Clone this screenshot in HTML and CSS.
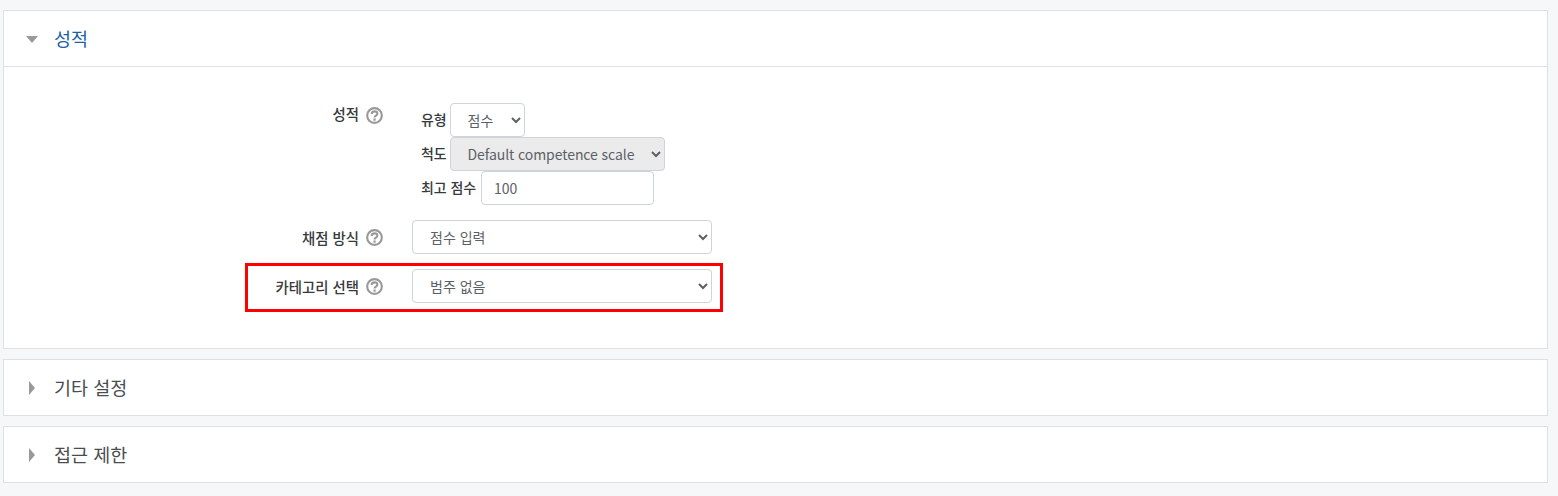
FILE: index.html
```html
<!DOCTYPE html>
<html lang="ko">
<head>
  <meta charset="UTF-8">
  <title>성적</title>
  <link rel="stylesheet" href="styles.css">
</head>
<body>
  <svg class="sprites" width="0" height="0">
    <symbol id="help" viewBox="0 0 16 16">
      <circle cx="8" cy="8" r="6.9" fill="none" stroke="#999" stroke-width="2"/>
      <path d="M5.4 6.6c0-1.6 1.1-2.5 2.7-2.5s2.6.9 2.6 2.2c0 2-2.6 1.8-2.6 3.6" fill="none" stroke="#999" stroke-width="2"/>
      <rect x="7" y="10.8" width="2.1" height="2.1" fill="#999"/>
    </symbol>
  </svg>

  <section class="panel">
    <div class="panel-head open">
      <span class="caret-down"></span>
      <h3 class="panel-title link">성적</h3>
    </div>
    <div class="panel-body">
      <div class="row row-grade">
        <div class="label-col">
          <label>성적</label>
          <svg class="help"><use href="#help"/></svg>
        </div>
        <div class="control-col stack">
          <div class="inline">
            <label>유형</label>
            <select class="field sel-type"><option>점수</option></select>
          </div>
          <div class="inline">
            <label>척도</label>
            <select class="field sel-scale" disabled><option>Default competence scale</option></select>
          </div>
          <div class="inline">
            <label>최고 점수</label>
            <input class="field input-max" type="text" value="100">
          </div>
        </div>
      </div>
      <div class="row">
        <div class="label-col">
          <label>채점 방식</label>
          <svg class="help"><use href="#help"/></svg>
        </div>
        <div class="control-col">
          <select class="field sel-wide"><option>점수 입력</option></select>
        </div>
      </div>
      <div class="row row-marked">
        <div class="label-col">
          <label>카테고리 선택</label>
          <svg class="help"><use href="#help"/></svg>
        </div>
        <div class="control-col">
          <select class="field sel-wide"><option>범주 없음</option></select>
        </div>
        <div class="marker"></div>
      </div>
    </div>
  </section>

  <section class="panel">
    <div class="panel-head">
      <span class="caret-right"></span>
      <h3 class="panel-title">기타 설정</h3>
    </div>
  </section>

  <section class="panel">
    <div class="panel-head">
      <span class="caret-right"></span>
      <h3 class="panel-title">접근 제한</h3>
    </div>
  </section>
</body>
</html>
```

FILE: styles.css
```css
* {
  box-sizing: border-box;
}
body {
  margin: 0;
  padding: 10px 10px 12px 3px;
  background: #f6f7f9;
  color: #373a3c;
  font-family: "Noto Sans CJK KR", "Noto Sans", sans-serif;
  font-size: 14px;
}
.sprites {
  position: absolute;
}
.panel {
  background: #fff;
  border: 1px solid #dfe0e2;
  margin-bottom: 10px;
}
.panel:last-child {
  margin-bottom: 0;
}
.panel-head {
  display: flex;
  align-items: center;
  height: 55px;
}
.panel-head.open {
  border-bottom: 1px solid #dfe0e2;
  height: 56px;
}
.panel-title {
  margin: 0 0 0 -1px;
  font-size: 18.5px;
  font-weight: 400;
  line-height: 1;
  color: #4a4d50;
}
.panel-title.link {
  margin-left: 0;
  color: #1d5fa8;
}
.caret-down {
  width: 0;
  height: 0;
  margin: 2px 16px 0 22px;
  border-left: 6px solid transparent;
  border-right: 6px solid transparent;
  border-top: 7px solid #999;
}
.caret-right {
  width: 0;
  height: 0;
  margin-left: 25px;
  margin-right: 20px;
  border-top: 7px solid transparent;
  border-bottom: 7px solid transparent;
  border-left: 6px solid #999;
}
.panel-body {
  padding: 36px 0 45px;
}
.row {
  display: flex;
  margin-bottom: 15px;
}
.row:last-child {
  margin-bottom: 0;
}
.row-marked {
  position: relative;
}
.marker {
  position: absolute;
  left: 241px;
  top: -6px;
  width: 478px;
  height: 49px;
  border: 3px solid #f00;
}
.label-col {
  display: flex;
  justify-content: flex-end;
  width: 408px;
  padding-right: 29px;
  height: 34px;
  align-items: center;
  gap: 7px;
  font-size: 14.4px;
  font-weight: 500;
}
.row-grade .label-col {
  height: 24px;
}
.row-grade .label-col label {
  margin-top: -4px;
}
.help {
  width: 17px;
  height: 17px;
  flex: none;
}
.control-col {
  flex: none;
}
.stack {
  padding-left: 9px;
}
.inline {
  display: flex;
  align-items: center;
  gap: 3px;
  height: 34px;
  font-weight: 500;
}
.inline label {
  margin-top: -2px;
  letter-spacing: -0.1px;
}
.field {
  height: 34px;
  border: 1px solid #ced4da;
  border-radius: 4px;
  background-color: #fff;
  color: #5b6167;
  font-family: inherit;
  font-size: 14px;
  font-weight: 400;
  padding: 0 0 0 13px;
}
.sel-type {
  width: 75px;
}
.sel-scale {
  width: 215px;
  background-color: #ebebeb;
  opacity: 1;
  letter-spacing: -0.08px;
}
.input-max {
  width: 173px;
  margin-left: 2px;
  padding-left: 12px;
}
.sel-wide {
  width: 300px;
}
```
